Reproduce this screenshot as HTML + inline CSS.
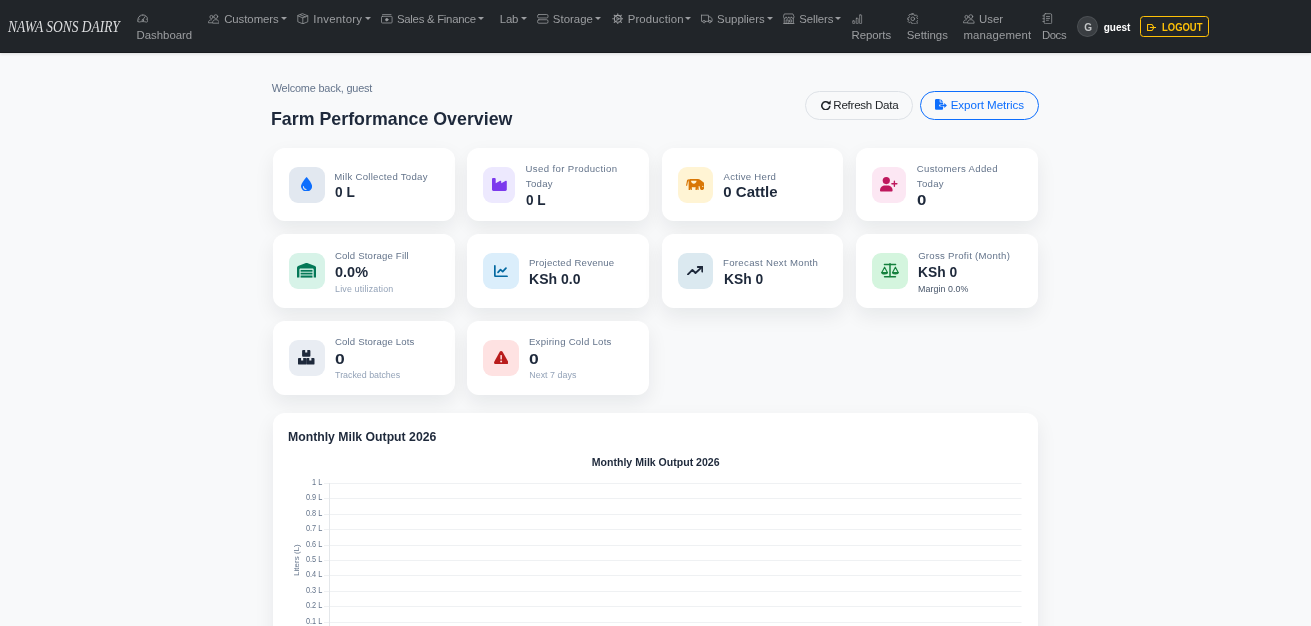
<!DOCTYPE html>
<html lang="en">
<head>
<meta charset="utf-8">
<title>Nawa Sons Dairy - Dashboard</title>
<style>
*{box-sizing:border-box;margin:0;padding:0}
html,body{width:1311px;height:626px;overflow:hidden}
body{will-change:transform;background:#f8f9fa;font-family:"Liberation Sans","DejaVu Sans",sans-serif;color:#1e293b;position:relative}
span,svg,i,div,nav,main,button,section{position:absolute}
button{background:none;padding:0;font:inherit;cursor:pointer}
span{white-space:nowrap;line-height:16px;transform-origin:0 50%}
.nav{left:0;top:0;width:1311px;height:53px;background:#212529;border-bottom:1px solid #191c1f;box-shadow:0 1px 3px rgba(0,0,0,.12)}
.brand{left:7.900px;top:15.800px;font-family:"Liberation Serif","DejaVu Serif",serif;font-style:italic;font-size:16.500px;color:#dcdddf;line-height:22px;transform:scaleX(.815);transform-origin:0 50%}
.n{color:#9c9ea1}
.caret{width:0;height:0;border-left:3.300px solid transparent;border-right:3.300px solid transparent;border-top:3.400px solid #9c9ea1;top:16.700px;margin-left:-.4px}
.avatar{left:1077px;top:15.700px;width:21.100px;height:21.300px;border-radius:50%;background:#3a3e42;border:1px solid #4c5054}
.av{color:#c4c6c8;font-weight:700}
.g{color:#fff;font-weight:700}
.logout{left:1140px;top:16px;width:69.200px;height:21px;border:1px solid #ffc107;border-radius:3.500px}
.lo{color:#ffc107;font-weight:700}
.w{color:#64748b}
.h{font-weight:700;color:#1e293b}
.btn{top:90.900px;height:28.800px;border-radius:14.400px}
.b1{left:805.300px;width:107.800px;border:1px solid #dde1e6}
.b2{left:920px;width:119px;border:1px solid #0d6efd}
.r{color:#212529}
.e{color:#0d6efd}
.card{background:#fff;border-radius:12px;box-shadow:0 8px 20px rgba(15,23,42,.075);width:182px;height:73.800px}
.ib{height:35.700px;border-radius:9px}
.l{color:#64748b}
.v{font-weight:700;color:#1e293b}
.s{color:#94a3b8}
.sd{color:#475569}
.chart{left:272.700px;top:413px;width:765.300px;height:260px;background:#fff;border-radius:12px;box-shadow:0 8px 20px rgba(15,23,42,.075)}
.ct{font-weight:700;color:#1e293b}
</style>
</head>
<body>
<nav class="nav">
<span class="brand">NAWA SONS DAIRY</span>
<svg style="left:136.70px;top:12.70px" width="11.6" height="11.6" viewBox="0 0 16 16"><g fill="none" stroke="#9c9ea1" stroke-width="1.05" stroke-linecap="round" stroke-linejoin="round"><path d="M1.200 11.200a7 7 0 1 1 13.600 0c-.3 1.100-1 1.600-2 1.300-3.200-.9-6.400-.9-9.600 0-1 .3-1.700-.2-2-1.300z"/><path d="M8 9.500 11.300 4.800"/><circle cx="8" cy="10" r="1.100"/><path d="M8 2.800v.8M3.600 4.600l.6.600M2.300 8.500h.9M13.700 8.500h-.9"/></g></svg>
<svg style="left:207.60px;top:12.70px" width="11.6" height="11.6" viewBox="0 0 16 16"><g fill="none" stroke="#9c9ea1" stroke-width="1.05" stroke-linecap="round" stroke-linejoin="round"><circle cx="10.800" cy="5" r="2.600"/><path d="M6.200 13.500c0-2.800 2-4.300 4.600-4.300s4.600 1.500 4.600 4.300z"/><circle cx="4.800" cy="5.500" r="2.200"/><path d="M4.800 9.300c-2.400 0-4.200 1.400-4.200 4.200h4.400"/></g></svg>
<svg style="left:297.20px;top:12.70px" width="11.6" height="11.6" viewBox="0 0 16 16"><g fill="none" stroke="#9c9ea1" stroke-width="1.05" stroke-linecap="round" stroke-linejoin="round"><path d="M8 1.100 14.900 3.900v8.200L8 14.900 1.100 12.100V3.900z"/><path d="M1.100 3.900 8 6.700l6.900-2.800M8 6.700v8.200M4.600 2.500l6.900 2.800"/></g></svg>
<svg style="left:381.30px;top:12.70px" width="11.6" height="11.6" viewBox="0 0 16 16"><g fill="none" stroke="#9c9ea1" stroke-width="1.05" stroke-linecap="round" stroke-linejoin="round"><rect x="0.700" y="4.600" width="14.600" height="9.200" rx="1.200"/><circle cx="8" cy="9.200" r="1.700" fill="#9c9ea1"/><path d="M2.200 2.200h11.600"/></g></svg>
<svg style="left:537.40px;top:12.70px" width="11.6" height="11.6" viewBox="0 0 16 16"><g fill="none" stroke="#9c9ea1" stroke-width="1.05" stroke-linecap="round" stroke-linejoin="round"><rect x="0.800" y="2.100" width="14.400" height="4.800" rx="1.800"/><rect x="0.800" y="9.300" width="14.400" height="4.800" rx="1.800"/></g></svg>
<svg style="left:611.60px;top:12.70px" width="11.6" height="11.6" viewBox="0 0 16 16"><g fill="none" stroke="#9c9ea1" stroke-width="1.05" stroke-linecap="round" stroke-linejoin="round"><circle cx="8" cy="8" r="4.700" stroke-width="1.500"/><circle cx="8" cy="8" r="1.500"/><path stroke-width="1.400" d="M8 1v1M8 14v1M1 8h1M14 8h1M3.050 3.050l.7.700M12.250 12.250l.7.700M3.050 12.950l.7-.7M12.250 3.750l.7-.7"/><path d="M9.500 8h3M7.200 9.300 5.700 11.900M7.200 6.700 5.700 4.100"/></g></svg>
<svg style="left:701.30px;top:12.70px" width="11.6" height="11.6" viewBox="0 0 16 16"><g fill="none" stroke="#9c9ea1" stroke-width="1.05" stroke-linecap="round" stroke-linejoin="round"><path d="M.7 3h9.600v8.500H6.400M.7 3v8.500h1.600"/><path d="M10.300 5.300h2.700l2.300 2.800v3.400h-1.100M10.300 11.500h.4"/><circle cx="4.300" cy="11.900" r="1.700"/><circle cx="12.300" cy="11.900" r="1.700"/></g></svg>
<svg style="left:783.30px;top:12.70px" width="11.6" height="11.6" viewBox="0 0 16 16"><g fill="none" stroke="#9c9ea1" stroke-width="1.05" stroke-linecap="round" stroke-linejoin="round"><path d="M2.300 1.300h11.400l1.600 4c0 1.200-.8 2-1.800 2s-1.900-.8-1.900-2c0 1.200-.8 2-1.800 2S8 6.500 8 5.300c0 1.200-.8 2-1.800 2s-1.900-.8-1.900-2c0 1.200-.8 2-1.800 2S.7 6.500.7 5.300z"/><path d="M1.700 7.500v7.200h12.600V7.500M.7 14.700h14.600M4.300 14.700V9.500h2.900v5.200M9.600 9.500h2.400v3H9.600z"/></g></svg>
<svg style="left:852.30px;top:13.60px" width="10.4" height="10.4" viewBox="0 0 16 16"><g fill="none" stroke="#9c9ea1" stroke-width="1.05" stroke-linecap="round" stroke-linejoin="round"><rect x="1.200" y="10.600" width="3" height="4.200" rx=".5"/><rect x="6.500" y="6.600" width="3" height="8.200" rx=".5"/><rect x="11.800" y="1.400" width="3" height="13.400" rx=".5"/></g></svg>
<svg style="left:906.90px;top:12.70px" width="11.6" height="11.6" viewBox="0 0 16 16"><g fill="none" stroke="#9c9ea1" stroke-width="1.05" stroke-linecap="round" stroke-linejoin="round"><circle cx="8" cy="8" r="2.500"/><path d="M6.800 1h2.400l.4 1.900 1.500.7 1.700-1 1.700 1.700-1 1.700.6 1.500 1.900.4v2.400l-1.900.4-.6 1.500 1 1.700-1.700 1.700-1.700-1-1.500.6L9.200 15H6.800l-.4-1.900-1.500-.6-1.700 1-1.700-1.700 1-1.700-.6-1.500L1 9.200V6.800l1.900-.4.600-1.500-1-1.700 1.700-1.700 1.700 1 1.500-.7z"/></g></svg>
<svg style="left:963.40px;top:12.70px" width="11.6" height="11.6" viewBox="0 0 16 16"><g fill="none" stroke="#9c9ea1" stroke-width="1.05" stroke-linecap="round" stroke-linejoin="round"><circle cx="10.800" cy="5" r="2.600"/><path d="M6.200 13.500c0-2.800 2-4.300 4.600-4.300s4.600 1.500 4.600 4.300z"/><circle cx="4.800" cy="5.500" r="2.200"/><path d="M4.800 9.300c-2.400 0-4.200 1.400-4.200 4.200h4.400"/></g></svg>
<svg style="left:1041.80px;top:12.60px" width="11.4" height="11.4" viewBox="0 0 16 16"><g fill="none" stroke="#9c9ea1" stroke-width="1.05" stroke-linecap="round" stroke-linejoin="round"><rect x="3" y="1" width="10.600" height="14" rx="1.700"/><path d="M6.200 5h4.400M6.200 7.600h4.400M6.200 10.200h2.800M1.200 4h1.800M1.200 8h1.800M1.200 12h1.800"/></g></svg>
<i class="caret" style="left:281.2px"></i><i class="caret" style="left:365.1px"></i><i class="caret" style="left:478.5px"></i><i class="caret" style="left:521.3px"></i><i class="caret" style="left:595.3px"></i><i class="caret" style="left:685.5px"></i><i class="caret" style="left:767.3px"></i><i class="caret" style="left:835.7px"></i>
<div class="avatar"></div>
<button class="logout" type="button" aria-label="Logout"></button>
<svg style="left:1146.90px;top:23.90px" width="9.50" height="7.00" viewBox="0 0 9.500 7" preserveAspectRatio="none"><g fill="none" stroke="#ffc107" stroke-width="1.100" stroke-linecap="round" stroke-linejoin="round"><path d="M.55.550h4.400L7 3.500 4.950 6.450H.55z"/><path d="M3.300 3.500h5.600"/></g></svg>
<span class="n" style="left:136.60px;top:26.85px;font-size:11.4px;letter-spacing:-0.025px">Dashboard</span>
<span class="n" style="left:224.17px;top:11.25px;font-size:11.4px;letter-spacing:-0.053px">Customers</span>
<span class="n" style="left:313.24px;top:11.25px;font-size:11.4px;letter-spacing:0.245px">Inventory</span>
<span class="n" style="left:396.94px;top:11.25px;font-size:11.4px;letter-spacing:-0.273px">Sales &amp; Finance</span>
<span class="n" style="left:499.80px;top:11.25px;font-size:11.4px;letter-spacing:-0.221px">Lab</span>
<span class="n" style="left:552.84px;top:11.25px;font-size:11.4px;letter-spacing:0.029px">Storage</span>
<span class="n" style="left:627.70px;top:11.25px;font-size:11.4px;letter-spacing:0.147px">Production</span>
<span class="n" style="left:717.04px;top:11.25px;font-size:11.4px;letter-spacing:0.029px">Suppliers</span>
<span class="n" style="left:799.24px;top:11.25px;font-size:11.4px;letter-spacing:-0.106px">Sellers</span>
<span class="n" style="left:851.60px;top:26.85px;font-size:11.4px;letter-spacing:-0.058px">Reports</span>
<span class="n" style="left:906.74px;top:26.85px;font-size:11.4px;letter-spacing:-0.004px">Settings</span>
<span class="n" style="left:979.00px;top:11.25px;font-size:11.4px;letter-spacing:-0.009px">User</span>
<span class="n" style="left:963.44px;top:26.85px;font-size:11.4px;letter-spacing:0.146px">management</span>
<span class="n" style="left:1041.90px;top:26.85px;font-size:11.4px;letter-spacing:-0.417px">Docs</span>
<span class="g" style="left:1103.73px;top:19.64px;font-size:10px">guest</span>
<span class="lo" style="left:1162.17px;top:19.53px;font-size:10.3px;transform:scaleX(0.9186)">LOGOUT</span>
<span class="av" style="left:1084.22px;top:19.64px;font-size:10px">G</span>
</nav>
<main class="main" style="left:0;top:0;width:1311px;height:626px">
<button class="btn b1" type="button" aria-label="Refresh Data"></button>
<button class="btn b2" type="button" aria-label="Export Metrics"></button>
<svg style="left:820.80px;top:99.80px" width="9.90" height="10.40" viewBox="0 0 9.900 10.400" preserveAspectRatio="none"><path fill="none" stroke="#212529" stroke-width="1.600" stroke-linecap="round" d="M8.700 6.600A4 4 0 1 1 7.200 2.500"/><path fill="#212529" d="M6.300 3.900 9.800.2 9.700 4.500z"/></svg>
<svg style="left:934.90px;top:99.40px" width="11.90" height="10.80" viewBox="0 0 11.900 10.800" preserveAspectRatio="none"><g fill="#0d6efd"><path d="M0 1.300C0 .6.600 0 1.300 0H4.700v2.700c0 .5.400.9.900.9h2.500v2H5c-.5 0-.9.400-.9.900s.4.900.9.900h3.100v2.100c0 .7-.6 1.300-1.300 1.300H1.300C.6 10.800 0 10.200 0 9.500z"/><path d="M5.500 0l2.600 2.800H5.500z"/><path d="M9.300 4.100 11.900 6.500 9.300 8.900V7.300H5.400V5.700h3.900z"/></g></svg>
<section class="card" style="left:272.7px;top:147.7px;width:182.2px"></section><section class="card" style="left:467.1px;top:147.7px;width:182px"></section><section class="card" style="left:662px;top:147.7px;width:180.9px"></section><section class="card" style="left:856px;top:147.7px;width:182px"></section><section class="card" style="left:272.7px;top:234.1px;width:182.2px"></section><section class="card" style="left:467.1px;top:234.1px;width:182px"></section><section class="card" style="left:662px;top:234.1px;width:180.9px"></section><section class="card" style="left:856px;top:234.1px;width:182px"></section><section class="card" style="left:272.7px;top:321px;width:182.2px"></section><section class="card" style="left:467.1px;top:321px;width:182px"></section>
<section class="chart"></section><svg style="left:0;top:0" width="1311" height="626" viewBox="0 0 1311 626" font-family="Liberation Sans, sans-serif"><line x1="324" y1="483.5" x2="1021.500" y2="483.5" stroke="#eff1f3" stroke-width="1"/><text transform="translate(322.300,484.9) scale(.9,1)" text-anchor="end" font-size="8.200" fill="#64748b">1 L</text><line x1="324" y1="498.5" x2="1021.500" y2="498.5" stroke="#eff1f3" stroke-width="1"/><text transform="translate(322.300,499.9) scale(.9,1)" text-anchor="end" font-size="8.200" fill="#64748b">0.9 L</text><line x1="324" y1="514.5" x2="1021.500" y2="514.5" stroke="#eff1f3" stroke-width="1"/><text transform="translate(322.300,515.9) scale(.9,1)" text-anchor="end" font-size="8.200" fill="#64748b">0.8 L</text><line x1="324" y1="529.5" x2="1021.500" y2="529.5" stroke="#eff1f3" stroke-width="1"/><text transform="translate(322.300,530.9) scale(.9,1)" text-anchor="end" font-size="8.200" fill="#64748b">0.7 L</text><line x1="324" y1="545.5" x2="1021.500" y2="545.5" stroke="#eff1f3" stroke-width="1"/><text transform="translate(322.300,546.9) scale(.9,1)" text-anchor="end" font-size="8.200" fill="#64748b">0.6 L</text><line x1="324" y1="560.5" x2="1021.500" y2="560.5" stroke="#eff1f3" stroke-width="1"/><text transform="translate(322.300,561.9) scale(.9,1)" text-anchor="end" font-size="8.200" fill="#64748b">0.5 L</text><line x1="324" y1="575.5" x2="1021.500" y2="575.5" stroke="#eff1f3" stroke-width="1"/><text transform="translate(322.300,576.9) scale(.9,1)" text-anchor="end" font-size="8.200" fill="#64748b">0.4 L</text><line x1="324" y1="591.5" x2="1021.500" y2="591.5" stroke="#eff1f3" stroke-width="1"/><text transform="translate(322.300,592.9) scale(.9,1)" text-anchor="end" font-size="8.200" fill="#64748b">0.3 L</text><line x1="324" y1="606.5" x2="1021.500" y2="606.5" stroke="#eff1f3" stroke-width="1"/><text transform="translate(322.300,607.9) scale(.9,1)" text-anchor="end" font-size="8.200" fill="#64748b">0.2 L</text><line x1="324" y1="622.5" x2="1021.500" y2="622.5" stroke="#eff1f3" stroke-width="1"/><text transform="translate(322.300,623.9) scale(.9,1)" text-anchor="end" font-size="8.200" fill="#64748b">0.1 L</text><line x1="329.500" y1="483" x2="329.500" y2="626" stroke="#e4e7ea" stroke-width="1"/><text x="655.700" y="465.700" text-anchor="middle" font-size="10.550" font-weight="700" fill="#1e293b">Monthly Milk Output 2026</text><text transform="translate(298.600,560.100) rotate(-90)" text-anchor="middle" font-size="8" fill="#64748b">Liters (L)</text></svg>
<div class="ib" style="left:289.2px;top:167.2px;width:35.7px;background:#e2e8f0"></div><div class="ib" style="left:483px;top:167.2px;width:31.9px;background:#ede9fe"></div><div class="ib" style="left:678px;top:167.2px;width:34.7px;background:#fff4d4"></div><div class="ib" style="left:872px;top:167.2px;width:33.9px;background:#fce7f3"></div><div class="ib" style="left:289.2px;top:253px;width:35.7px;background:#d7f3e8"></div><div class="ib" style="left:483px;top:253px;width:35.7px;background:#dbeefb"></div><div class="ib" style="left:678px;top:253px;width:34.7px;background:#dbe9f0"></div><div class="ib" style="left:872px;top:253px;width:35.7px;background:#d4f5de"></div><div class="ib" style="left:289.2px;top:340px;width:35.7px;background:#e9edf3"></div><div class="ib" style="left:483px;top:340px;width:35.7px;background:#fee2e2"></div>
<svg style="left:300.90px;top:176.90px" width="11.10" height="14.60" viewBox="0 0 11 14.6" preserveAspectRatio="none"><path fill="#0d6efd" d="M5.500 0C5.500 0 0 6.100 0 9.200a5.500 5.400 0 0 0 11 0C11 6.100 5.500 0 5.500 0z"/><path d="M2.400 9.400a3 3 0 0 0 2.700 3" fill="none" stroke="#e2e8f0" stroke-width="1" stroke-linecap="round"/></svg>
<svg style="left:491.90px;top:178.10px" width="14.80" height="12.90" viewBox="0 0 512 448" preserveAspectRatio="none"><path fill="#7c3aed" d="M32 0C14 0 0 14 0 32V400c0 26.500 21.500 48 48 48H464c26.500 0 48-21.500 48-48V120c0-18-19-30-35-21L320 183V120c0-18-19-30-35-21L128 183V32c0-18-14-32-32-32z"/></svg>
<svg style="left:685.90px;top:178.70px" width="18.20" height="11.20" viewBox="0 0 18 11" preserveAspectRatio="none"><path fill="#d97706" d="M2.600 1.600C2.600.700 3.300 0 4.200 0H11.800C12.800 0 13.600.300 14.300.900L17.200 3.200C17.700 3.600 18 4.200 18 4.800V8.600C18 9.900 17 10.900 15.800 10.900 14.800 10.900 14.100 10.300 13.900 9.300L13.500 7.200 12.500 6.800V11H9.400V7.900C8.800 8.100 8.200 8.200 7.600 8.200S6.400 8.100 5.800 7.900V11H2.600z"/><path fill="#d97706" d="M3 .300C1.600.300.900 1.200.800 2.400L0 6.700H1.100L1.900 2.900C2 2.500 2.300 2.200 2.700 2.200z"/><path fill="#fff4d4" d="M5 1.800H10.400C10.400 3.400 9.200 4.600 7.700 4.600S5 3.400 5 1.800z"/><path fill="#fff4d4" d="M4 9.500h.5V11H4zM10.800 9.500h.5V11h-.5z"/><circle cx="16.600" cy="7.300" r=".55" fill="#fff4d4"/></svg>
<svg style="left:880.10px;top:177.30px" width="17.90" height="14.60" viewBox="0 0 17.900 14.600" preserveAspectRatio="none"><g fill="#be185d"><circle cx="6.300" cy="3.600" r="3.600"/><path d="M0 13.400C0 10.500 2.400 8.600 5 8.600h2.600c2.600 0 5 1.900 5 4.800 0 .7-.5 1.200-1.200 1.200H1.200c-.7 0-1.200-.5-1.200-1.200z"/><path d="M14.400 3.600c.4 0 .7.300.7.700v1.800h1.800c.4 0 .7.300.7.700s-.3.700-.7.700h-1.800v1.800c0 .4-.3.700-.7.700s-.7-.3-.7-.7V7.500h-1.800c-.4 0-.7-.3-.7-.7s.3-.7.700-.7h1.800V4.300c0-.4.300-.7.700-.7z"/></g></svg>
<svg style="left:296.90px;top:263.40px" width="19.10" height="14.60" viewBox="0 0 19.100 14.600" preserveAspectRatio="none"><g fill="#047857"><path d="M0 14.600V4.700c0-.7.400-1.300 1.100-1.600L8.900.1c.4-.2.900-.2 1.300 0l7.800 3c.7.300 1.100.9 1.100 1.600v9.900h-2.400V6.800c0-.7-.5-1.200-1.200-1.200H3.600c-.7 0-1.200.5-1.200 1.200v7.800z"/><rect x="3.600" y="6.900" width="11.900" height="1.800"/><rect x="3.600" y="9.700" width="11.900" height="1.800"/><rect x="3.600" y="12.500" width="11.900" height="2.100"/></g></svg>
<svg style="left:493.90px;top:264.60px" width="13.90" height="12.30" viewBox="0 0 13.900 12.300" preserveAspectRatio="none"><g fill="none" stroke="#0369a1" stroke-width="1.700" stroke-linecap="round" stroke-linejoin="round"><path d="M.85.850v9.300c0 .700.600 1.300 1.300 1.300h10.900"/><path d="M4 7.400 6.500 4.700l2.200 2 3.300-3.600"/></g></svg>
<svg style="left:686.90px;top:265.90px" width="16.30" height="9.30" viewBox="0 0 16.300 9.300" preserveAspectRatio="none"><g fill="none" stroke="#1e293b" stroke-width="1.900" stroke-linecap="round" stroke-linejoin="round"><path d="M1 8.300 5.400 3.900 8.500 7l6.400-5.900"/><path d="M10.800 1h4.500v4.500"/></g></svg>
<svg style="left:880.90px;top:263.40px" width="18.00" height="14.60" viewBox="0 0 18 14.6" preserveAspectRatio="none"><g fill="none" stroke="#15803d" stroke-linecap="round" stroke-linejoin="round"><path stroke-width="1.500" d="M9 .8v12.600"/><path stroke-width="1.400" d="M3.500 13.800h11M3.400 1.500h11.200"/><path stroke-width="1.150" d="M3.600 4.200.8 9.500h5.600zM14.400 4.200 11.600 9.500h5.600z"/><path stroke-width="1.100" fill="#15803d" d="M.7 9.600h5.800c0 .9-1.300 1.400-2.900 1.400S.7 10.500.7 9.600zM11.500 9.600h5.800c0 .9-1.300 1.400-2.900 1.400s-2.900-.5-2.900-1.400z"/></g></svg>
<svg style="left:298.40px;top:350.40px" width="16.50" height="14.60" viewBox="0 0 16.500 14.600" preserveAspectRatio="none"><g fill="#1e293b"><path d="M5 0h2.200v2.600h2.100V0h2.200c.5 0 .9.400.9.900v4.900c0 .5-.4.900-.9.900H5c-.5 0-.9-.4-.9-.9V.9c0-.5.400-.9.900-.9z"/><path d="M.9 7.900h2.200v2.600h2.100V7.900h2.200c.5 0 .9.400.9.900v4.900c0 .5-.4.900-.9.900H.9c-.5 0-.9-.4-.9-.9V8.800c0-.5.400-.9.900-.9z"/><path d="M9.100 7.900h2.200v2.600h2.100V7.900h2.200c.5 0 .9.400.9.900v4.900c0 .5-.4.900-.9.900H9.100c-.5 0-.9-.4-.9-.9V8.800c0-.5.400-.9.900-.9z"/></g></svg>
<svg style="left:493.90px;top:350.90px" width="14.30" height="13.30" viewBox="0 0 14.300 13.300" preserveAspectRatio="none"><path fill="#b91c1c" d="M7.150 0c.6 0 1.100.3 1.400.8l5.500 9.900c.6 1.100-.2 2.600-1.400 2.600H1.650c-1.300 0-2-1.400-1.400-2.600L5.750.8C6.050.3 6.550 0 7.150 0z"/><rect x="6.400" y="3.900" width="1.500" height="4.600" rx=".6" fill="#fee2e2"/><circle cx="7.150" cy="10.400" r="1" fill="#fee2e2"/></svg>
<span class="w" style="left:271.69px;top:80.12px;font-size:10.9px;letter-spacing:-0.183px">Welcome back, guest</span>
<span class="h" style="left:271.09px;top:110.69px;font-size:18.5px;transform:scaleX(0.9623)">Farm Performance Overview</span>
<span class="r" style="left:833.30px;top:97.38px;font-size:11.6px;letter-spacing:-0.263px">Refresh Data</span>
<span class="e" style="left:950.70px;top:97.38px;font-size:11.6px;letter-spacing:-0.049px">Export Metrics</span>
<span class="l" style="left:334.30px;top:168.67px;font-size:9.6px;letter-spacing:0.286px">Milk Collected Today</span>
<span class="v" style="left:334.93px;top:184.10px;font-size:15px;transform:scaleX(0.9130)">0 L</span>
<span class="l" style="left:525.56px;top:160.57px;font-size:9.6px;letter-spacing:0.377px">Used for Production</span>
<span class="l" style="left:525.87px;top:175.67px;font-size:9.6px;letter-spacing:0.274px">Today</span>
<span class="v" style="left:525.93px;top:191.90px;font-size:15px;transform:scaleX(0.9081)">0 L</span>
<span class="l" style="left:723.54px;top:168.67px;font-size:9.6px;letter-spacing:0.284px">Active Herd</span>
<span class="v" style="left:723.37px;top:184.10px;font-size:15px">0 Cattle</span>
<span class="l" style="left:916.76px;top:160.57px;font-size:9.6px;letter-spacing:0.326px">Customers Added</span>
<span class="l" style="left:916.87px;top:175.67px;font-size:9.6px;letter-spacing:0.274px">Today</span>
<span class="v" style="left:916.80px;top:191.90px;font-size:15px;transform:scaleX(1.1223)">0</span>
<span class="l" style="left:334.96px;top:247.57px;font-size:9.6px;letter-spacing:0.172px">Cold Storage Fill</span>
<span class="v" style="left:334.89px;top:263.50px;font-size:15px;transform:scaleX(0.9663)">0.0%</span>
<span class="s" style="left:335.06px;top:280.52px;font-size:8.9px;letter-spacing:0.164px">Live utilization</span>
<span class="l" style="left:528.91px;top:254.57px;font-size:9.6px;letter-spacing:0.230px">Projected Revenue</span>
<span class="v" style="left:529.36px;top:271.10px;font-size:15px;transform:scaleX(0.9358)">KSh 0.0</span>
<span class="l" style="left:723.01px;top:254.57px;font-size:9.6px;letter-spacing:0.324px">Forecast Next Month</span>
<span class="v" style="left:723.58px;top:271.10px;font-size:15px;transform:scaleX(0.9214)">KSh 0</span>
<span class="l" style="left:918.14px;top:247.57px;font-size:9.6px;letter-spacing:0.282px">Gross Profit (Month)</span>
<span class="v" style="left:918.08px;top:263.50px;font-size:15px;transform:scaleX(0.9214)">KSh 0</span>
<span class="sd" style="left:917.96px;top:280.52px;font-size:8.9px;letter-spacing:0.071px">Margin 0.0%</span>
<span class="l" style="left:334.96px;top:333.77px;font-size:9.6px;letter-spacing:0.166px">Cold Storage Lots</span>
<span class="v" style="left:334.77px;top:350.50px;font-size:15px;transform:scaleX(1.1649)">0</span>
<span class="s" style="left:335.08px;top:367.02px;font-size:8.9px;letter-spacing:-0.016px">Tracked batches</span>
<span class="l" style="left:528.91px;top:333.77px;font-size:9.6px;letter-spacing:0.271px">Expiring Cold Lots</span>
<span class="v" style="left:529.27px;top:350.50px;font-size:15px;transform:scaleX(1.1649)">0</span>
<span class="s" style="left:529.26px;top:367.02px;font-size:8.9px;letter-spacing:0.029px">Next 7 days</span>
<span class="ct" style="left:287.86px;top:428.80px;font-size:13px;transform:scaleX(0.9420)">Monthly Milk Output 2026</span>
</main>
</body>
</html>
